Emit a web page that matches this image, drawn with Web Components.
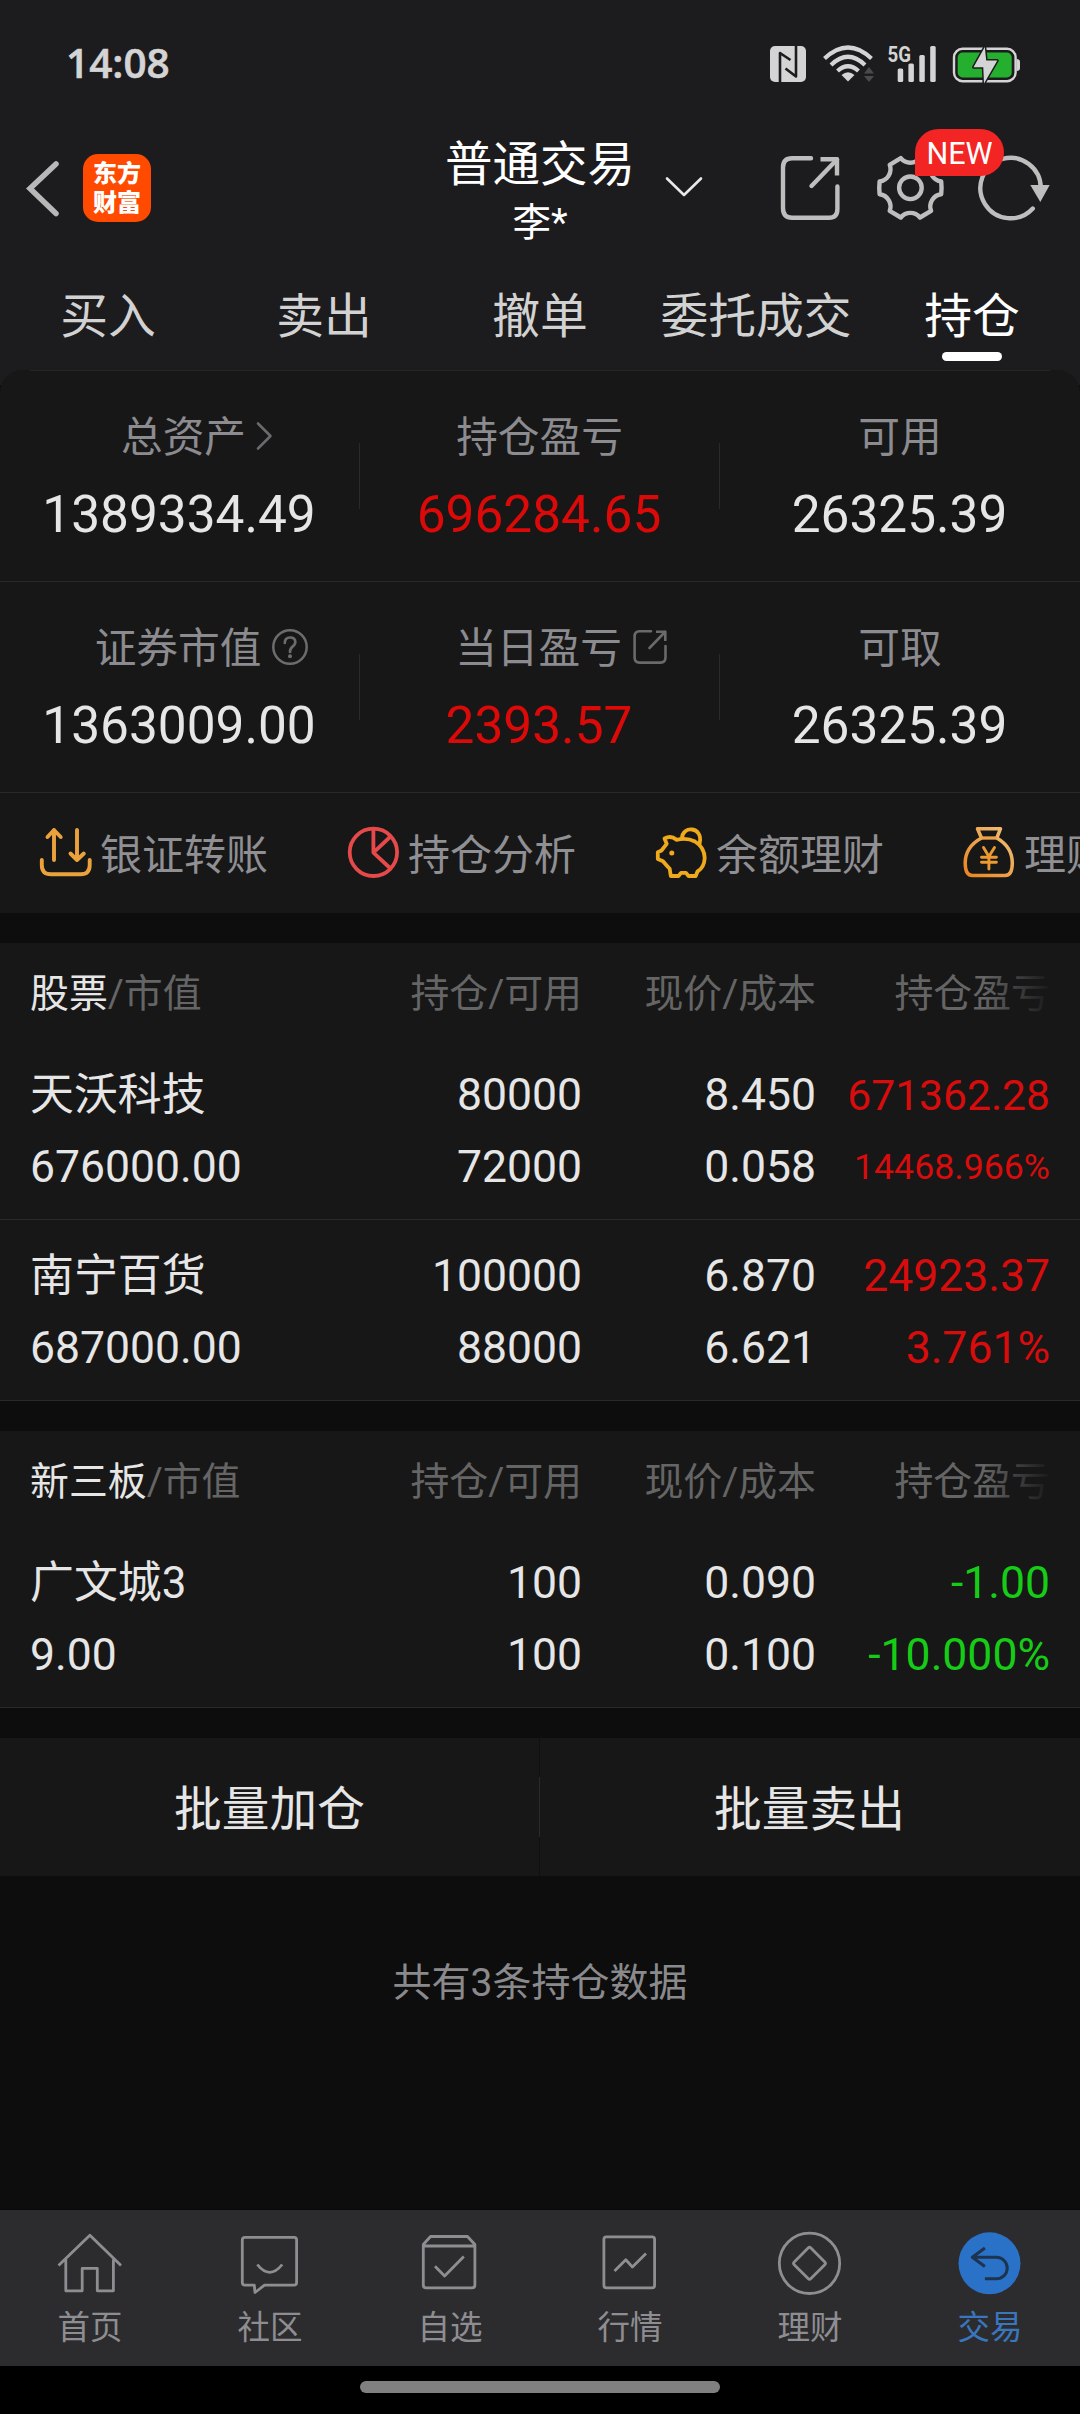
<!DOCTYPE html>
<html lang="zh-CN">
<head>
<meta charset="utf-8">
<title>持仓</title>
<style>
html,body{margin:0;padding:0;background:#0d0d0d}
body{width:1080px;height:2414px;overflow:hidden;font-family:Roboto,"Noto Sans CJK SC",sans-serif;color:#e6e6e6}
</style>
</head>
<body>
<trade-app></trade-app>
<script>
const ICONS = {
  nfc: ['769 45 38 38', `<rect x="770" y="46" width="36" height="36" rx="5" fill="#d4d4d4"/><path d="M780 82V53L790.5 60M796 46V76.500L785.500 68.500" fill="none" stroke="#1c1c1e" stroke-width="2.600"/>`],
  wifi: ['822 44 52 40', `<g fill="none" stroke="#d4d4d4" stroke-width="4.200"><path d="M824.500 58.500Q848 36.500 871.500 58.500"/><path d="M831 65Q848 48.500 865 65"/><path d="M837.500 71Q848 61.500 858.500 71"/></g><path d="M841.500 75Q848 69.500 854.500 75L848 81.500Z" fill="#d4d4d4"/><path d="M864 73.500L869 67L874 73.500ZM864 76L869 82L874 76Z" fill="#4a4a4c"/>`],
  bars: ['888 44 50 40', `<text x="887.500" y="62" font-family="Roboto" font-size="22" font-weight="700" textLength="23.500" lengthAdjust="spacingAndGlyphs" fill="#d4d4d4">5G</text><g fill="#d4d4d4"><rect x="897.700" y="68.500" width="5.500" height="13.500" rx="1.500"/><rect x="908.400" y="63.500" width="5.500" height="18.500" rx="1.500"/><rect x="919.300" y="55" width="5.500" height="27" rx="1.500"/><rect x="930.200" y="46" width="5.500" height="36" rx="1.500"/></g>`],
  battery: ['952 45 70 39', `<rect x="954" y="48.800" width="61.600" height="32.400" rx="8.500" fill="none" stroke="#d4d4d4" stroke-width="2.400"/><path d="M1016.500 59Q1020 59 1020 62V68Q1020 71 1016.500 71Z" fill="#d4d4d4"/><rect x="957.700" y="52.500" width="54" height="25" rx="5" fill="#24b02e"/><path d="M984.800 47L973.500 67.200H983.300L984 83.500L997.300 60.500H986.200Z" fill="#d4d4d4" stroke="#1c1c1e" stroke-width="3" paint-order="stroke"/>`],
  back: ['26 158 36 60', `<path d="M56 164L30 188.500L56 213.500" fill="none" stroke="#b8b8b8" stroke-width="5.500" stroke-linecap="round" stroke-linejoin="miter"/>`],
  down: ['664 174 40 26', `<path d="M667 178.500L684 195L701 178.500" fill="none" stroke="#e8e8e8" stroke-width="2.600" stroke-linecap="round"/>`],
  share: ['780 156 62 66', `<g fill="none" stroke="#bebebe" stroke-width="4.400"><path d="M811 159.200H792Q783 159.200 783 168.500V209Q783 218.800 792 218.800H829Q837.400 218.800 837.400 210V187.500" stroke-linecap="round"/><path d="M820.500 160.300H837V176.500" stroke-linecap="butt"/><path d="M837 160.500L811.500 187" stroke-linecap="round"/></g>`],
  gear: ['876 154 70 68', `<g transform="translate(910.400 187.800)" fill="none" stroke="#bebebe" stroke-width="4.400" stroke-linejoin="round"><circle r="11.300"/><path d="M30.800 -6.400Q31.500 0 30.800 6.400A12.300 12.300 0 0 0 20.700 23L9.600 29.700A12.300 12.300 0 0 0 -9.600 29.700L-20.700 23A12.300 12.300 0 0 0 -30.800 6.400Q-31.500 0 -30.800 -6.400A12.300 12.300 0 0 0 -20.700 -23L-9.600 -29.700A12.300 12.300 0 0 0 9.600 -29.700L20.700 -23A12.300 12.300 0 0 0 30.800 -6.400Z"/></g>`],
  reload: ['978 154 74 68', `<path d="M1032.800 208.500A30.200 30.200 0 1 1 1040.800 188" fill="none" stroke="#bebebe" stroke-width="4.400" stroke-linecap="round"/><path d="M1030.300 185H1049.700L1040.300 202Z" fill="#bebebe"/>`],
  chev: ['257 419 17 30', `<path d="M259 421.500L271.500 434L259 446.500" fill="none" stroke="#6a6a6c" stroke-width="2.600" stroke-linecap="round"/>`],
  help: ['271 626 38 38', `<circle cx="290" cy="645" r="16.700" fill="none" stroke="#6c6c6e" stroke-width="2.500"/><path d="M284.800 641Q284.800 635.500 290 635.500Q295.300 635.500 295.300 640Q295.300 642.600 292.300 644.800Q290 646.500 290 650" fill="none" stroke="#6c6c6e" stroke-width="2.700" stroke-linecap="round"/><circle cx="290" cy="654.300" r="2" fill="#6c6c6e"/>`],
  out: ['632 627 36 36', `<g fill="none" stroke="#6a6a6c" stroke-width="2.600"><path d="M651 629.300H639.500Q634.600 629.300 634.600 634.500V655.500Q634.600 660.600 639.500 660.600H660.500Q665.500 660.600 665.500 655.500V644" stroke-linecap="round"/><path d="M656 629.700H665.300V639"/><path d="M665 630L649.500 646" stroke-linecap="round"/></g>`],
  transfer: ['39 826 53 53', `<g fill="none" stroke="#eba23c" stroke-width="3.900" stroke-linecap="round" stroke-linejoin="round"><path d="M54 860V830M47.500 837L54 830L60.700 837"/><path d="M77 830V860M70.500 853.500L77 860L83.800 853.500"/><path d="M41.800 860V865Q41.800 874.300 51 874.300H80.500Q89.700 874.300 89.700 865V860"/></g>`],
  pie: ['347 826 53 53', `<g fill="none" stroke="#e5494a" stroke-width="3.800" stroke-linejoin="round"><circle cx="373.400" cy="852.300" r="23.700"/><path d="M373.400 829V852.600L390 837M373.400 852.600L390.500 868.500"/></g>`],
  pig: ['655 826 53 53', `<g fill="none" stroke="#efa91c" stroke-width="3.800" stroke-linejoin="round" stroke-linecap="round"><path d="M664.500 838.500Q671 835 676.500 839.800Q687 837.500 695 841.500Q704.500 847.500 704.700 858Q704.300 867.500 697.500 871.500L695.700 876H688.500L686 872.800H681L678.500 876H670.800L669.700 868.800Q666.500 865.500 663 861.300L657.800 859V852.300L661.500 850.500L666.700 843.800Z"/><path d="M682 838.500C682 825 703.500 826.500 699.700 843"/></g><circle cx="671.800" cy="853" r="2.500" fill="#efa91c"/>`],
  bag: ['963 826 53 53', `<defs><linearGradient id="g" x1="0" y1="1" x2="1" y2="0"><stop offset="0" stop-color="#ec8420"/><stop offset="1" stop-color="#efc27a"/></linearGradient></defs><g fill="none" stroke="url(#g)" stroke-width="3.500" stroke-linejoin="round" stroke-linecap="round"><path d="M977.500 828.700H1000.500L996.800 838Q1012.300 847 1012.300 863Q1012.300 875.600 1005 875.600H972.500Q965.200 875.600 965.200 863Q965.200 847 981.500 838Z"/></g><path d="M981.500 838H996.800" stroke="#eda24a" stroke-width="3.300"/><g fill="none" stroke="#ec9a30" stroke-width="2.900" stroke-linecap="round"><path d="M983.500 847.500L988.900 856.500L994.500 847.500M981.500 857.300H996.400M981.500 862.300H996.400M988.900 857V869"/></g>`],
  home: ['57 2230 66 66', `<path d="M58.500 2265.500L89.900 2235.300L121 2265.500M65.800 2259.500V2290.800H82.200V2268.400H97.300V2290.800H113.400V2259.500"/>`],
  chat: ['237 2230 66 66', `<path d="M245 2237.300H294Q296.600 2237.300 296.600 2240V2282.500Q296.600 2285.200 294 2285.200H264.500L255 2292.500L254.300 2285.200H245Q242.300 2285.200 242.300 2282.500V2240Q242.300 2237.300 245 2237.300ZM257.300 2264.500Q269.700 2280.200 282.200 2264.500"/>`],
  pick: ['417 2230 66 66', `<path d="M423.300 2246H474.900V2285Q474.900 2287.800 472 2287.800H426Q423.300 2287.800 423.300 2285V2244.500L430.500 2236.500H467.500L474.900 2244.500V2246M435 2266.300L444.600 2276L463.800 2256.500"/>`],
  market: ['597 2230 66 66', `<rect x="603.900" y="2236.800" width="50.700" height="51" rx="2.500"/><path d="M614.500 2271L625.800 2259.800L632.400 2267L646 2253.500"/>`],
  wealth: ['777 2230 66 66', `<circle cx="809.500" cy="2263.300" r="30.200"/><rect x="797.700" y="2251.500" width="23.600" height="23.600" rx="2" transform="rotate(45 809.500 2263.300)"/>`],
  trade: ['957 2230 66 66', `<circle cx="989.500" cy="2263.300" r="31" fill="#2a72c7" stroke="none"/><path d="M984.900 2248L972.300 2257.300L984.900 2266.500M973 2257.300H996.500A10.700 10.700 0 0 1 996.500 2278.800H984.900" stroke="#1c3450" stroke-width="3"/>`]
};

const define = (tag, html, setup) => {
  const tpl = document.createElement('template');
  tpl.innerHTML = html;
  customElements.define(tag, class extends HTMLElement {
    constructor() {
      super();
      this.attachShadow({ mode: 'open' }).append(tpl.content.cloneNode(true));
    }
    connectedCallback() { if (setup) setup(this, this.shadowRoot); }
  });
};

define('ui-icon', `<style>:host{display:block;flex:none}svg{display:block;overflow:visible}</style>`, (el, root) => {
  const [vb, body] = ICONS[el.getAttribute('name')];
  const [, , w, h] = vb.split(' ');
  root.innerHTML += `<svg viewBox="${vb}" width="${w}" height="${h}" fill="none" stroke-linejoin="round" ${el.hasAttribute('line') ? 'stroke="#8e8e92" stroke-width="2.8"' : ''}>${body}</svg>`;
});

define('status-bar', `<style>
:host{display:flex;justify-content:space-between;height:128px;padding:0 58px 0 66px;box-sizing:border-box;align-items:center}
.t{font:600 40.500px/60px "Open Sans",sans-serif;color:#d4d4d4;-webkit-text-stroke:.6px #d4d4d4;margin-top:-2px}
.r{display:flex;align-items:center;height:40px}
</style><div class="t">14:08</div><div class="r">
<ui-icon name="nfc"></ui-icon><ui-icon name="wifi" style="margin-left:15px"></ui-icon><ui-icon name="bars" style="margin-left:14px"></ui-icon><ui-icon name="battery" style="margin-left:14px"></ui-icon></div>`);

define('brand-logo', `<style>
:host{display:flex;flex-direction:column;justify-content:center;align-items:center;width:68px;height:68px;border-radius:15px;background:#ff4a00;color:#fff;font:900 24px/29px "Noto Sans CJK SC",sans-serif;box-sizing:border-box;padding-bottom:3px}
</style><div>东方<br>财富</div>`);

define('app-header', `<style>
:host{display:grid;grid-template-columns:440px 200px 1fr;height:120px}
.l{display:flex;align-items:center;padding:0 0 4px 26px;gap:21px}
.c{display:flex;flex-direction:column;align-items:center;padding-top:7px;color:#fff;font-size:47.500px;line-height:60px;white-space:nowrap}
.c small{font-size:38.500px;line-height:56px}
.r{display:flex;align-items:center;padding:0 0 4px 24px}
.g{position:relative;margin-left:34px}
.b{position:absolute;left:39px;top:-25px;width:89px;height:47px;border-radius:24px 24px 24px 0;background:#f22424;color:#fff;font-size:30.500px;line-height:49px;text-align:center;z-index:1}
</style>
<div class="l"><ui-icon name="back"></ui-icon><brand-logo></brand-logo></div>
<div class="c"><span>普通交易</span><small>李*</small></div>
<div class="r"><ui-icon name="down" style="margin-top:-2px"></ui-icon><ui-icon name="share" style="margin-left:76px"></ui-icon>
<div class="g"><ui-icon name="gear"></ui-icon><div class="b">NEW</div></div><ui-icon name="reload" style="margin-left:32px"></ui-icon></div>`);

define('nav-tab', `<style>
:host{display:flex;flex-direction:column;align-items:center;flex:1;color:#d2d2d2;font-size:47.800px;line-height:70px;padding-top:34px;white-space:nowrap}
:host([active]){color:#fff}
i{display:block;width:60px;height:9px;border-radius:4.500px}
:host([active]) i{background:#fff}
</style><slot></slot><i></i>`);

define('nav-tabs', `<style>:host{display:flex;height:122px}</style><slot></slot>`);

define('summary-cell', `<style>
:host{flex:1 1 0;display:flex;align-items:stretch;min-width:0}
.m{flex:1;padding-top:37px;display:flex;flex-direction:column;align-items:center}
.k{display:flex;align-items:center;justify-content:center;height:60px;font-size:41.700px;line-height:60px;color:#8b8b90;padding-left:var(--shift,0);white-space:nowrap}
.k ::slotted(ui-icon){margin-left:10px;margin-bottom:5px}
.v{margin:17px 1px 0 0;font-size:51.400px;line-height:60px;white-space:nowrap}
i{width:1px;height:66px;margin-top:72px;background:#2a2a2b}
:host(:last-child) i{display:none}
:host([up]) .v{color:#dc0909}
</style><div class="m"><div class="k"><span></span><slot></slot></div><div class="v"></div></div><i></i>`, (el, r) => {
  r.querySelector('.k span').textContent = el.getAttribute('label');
  r.querySelector('.v').textContent = el.getAttribute('value');
});

define('summary-row', `<style>:host{display:flex;height:211px;box-sizing:border-box;border-bottom:1px solid #29292a}</style><slot></slot>`);

define('asset-card', `<style>
:host{display:block;background:linear-gradient(#1c1c1e 15px,#0d0d0d 15px)}
.box{background:#171717;border-radius:22px 22px 0 0}
.top{height:1px;margin:0 30px;background:#252526}
</style><div class="box"><div class="top"></div><slot></slot></div>`);

define('quick-item', `<style>
:host{display:flex;align-items:center;gap:8px;flex:none;font-size:42px;line-height:60px;color:#8f8f94;white-space:nowrap}
span{width:168px;padding-top:6px}
</style><span><slot></slot></span>`, (el, r) => {
  const i = document.createElement('ui-icon');
  i.setAttribute('name', el.getAttribute('icon'));
  r.insertBefore(i, r.querySelector('span'));
});

define('quick-bar', `<style>:host{display:flex;gap:79px;height:120px;padding-left:39px;padding-bottom:1px;box-sizing:border-box;overflow:hidden;align-items:center}</style><slot></slot>`);

define('holding-head', `<style>
:host{display:grid;grid-template-columns:318px 234px 234px 234px;height:96px;padding:5px 30px 0;box-sizing:border-box;align-items:center;font-size:38.900px;line-height:60px;color:#656565;text-align:right;position:relative;white-space:nowrap}
div{text-align:left}b{font-weight:400;color:#e6e6e6}
i{position:absolute;right:0;top:0;width:96px;height:96px;background:linear-gradient(90deg,rgba(23,23,23,0),#171717 68px)}
</style><div><b><slot></slot></b>/市值</div><span>持仓/可用</span><span>现价/成本</span><span>持仓盈亏</span><i></i>`);

define('holding-row', `<style>
:host{display:grid;grid-template-columns:318px 234px 234px 234px;grid-auto-rows:72px;height:181px;padding:20px 30px 0;box-sizing:border-box;border-bottom:1px solid #29292a;font-size:44.500px;line-height:72px;text-align:right;white-space:nowrap}
.n{text-align:left}.name{font-size:43.900px}
:host([up]) .p{color:#d80c0c}:host([down]) .p{color:#16cc16}
.m{font-size:42.600px}
.s{font-size:35.700px}
</style>`, (el, r) => {
  const f = el.getAttribute('data').split('|');
  const fit = t => t.length > 9 ? ' s' : t.length > 8 ? ' m' : '';
  const cls = ['n name', '', '', 'p' + fit(f[3]), 'n', '', '', 'p' + fit(f[7])];
  f.forEach((t, i) => {
    const s = document.createElement('span');
    s.className = cls[i];
    s.textContent = t;
    r.append(s);
  });
});

define('holding-block', `<style>:host{display:block;background:#171717;margin-top:30px}</style><slot name="head"></slot><slot></slot>`);

define('batch-bar', `<style>
:host{display:flex;height:138px;margin-top:30px;background:#171717;align-items:center}
div{flex:1 1 0;text-align:center;font-size:47.700px;line-height:70px;padding:6px 1px 0 0}
i{width:1px;height:138px;margin-left:-1px;background:linear-gradient(#101010 39px,#2a2a2b 39px 99px,#101010 99px)}
</style><div>批量加仓</div><i></i><div>批量卖出</div>`);

define('list-note', `<style>:host{display:block;flex:1;padding-top:77px;text-align:center;font-size:39px;line-height:60px;color:#8a8a8d}</style><slot></slot>`);

define('dock-item', `<style>
:host{flex:1;display:flex;flex-direction:column;align-items:center;padding-top:20px;font-size:32.500px;line-height:40px;color:#8e8e92}
:host([active]){color:#3a76be}
span{margin-top:12px}
</style><span><slot></slot></span>`, (el, r) => {
  const i = document.createElement('ui-icon');
  i.setAttribute('name', el.getAttribute('icon'));
  i.setAttribute('line', '');
  r.insertBefore(i, r.querySelector('span'));
});

define('dock-bar', `<style>:host{display:flex;height:157px;box-sizing:border-box;background:#2c2c2e;border-top:1px solid #090909}</style><slot></slot>`);

define('gesture-bar', `<style>:host{display:flex;justify-content:center;height:48px;padding-top:15px;box-sizing:border-box;background:#000}i{width:360px;height:12px;border-radius:6px;background:#808080}</style><i></i>`);

define('trade-app', `<style>
:host{display:flex;flex-direction:column;width:1080px;height:2414px}
header{background:#1c1c1e}
</style>
<header><status-bar></status-bar><app-header></app-header>
<nav-tabs><nav-tab>买入</nav-tab><nav-tab>卖出</nav-tab><nav-tab>撤单</nav-tab><nav-tab>委托成交</nav-tab><nav-tab active>持仓</nav-tab></nav-tabs></header>
<asset-card>
<summary-row><summary-cell label="总资产" value="1389334.49" style="--shift:35px"><ui-icon name="chev"></ui-icon></summary-cell><summary-cell label="持仓盈亏" value="696284.65" up></summary-cell><summary-cell label="可用" value="26325.39"></summary-cell></summary-row>
<summary-row><summary-cell label="证券市值" value="1363009.00" style="--shift:45px"><ui-icon name="help"></ui-icon></summary-cell><summary-cell label="当日盈亏" value="2393.57" up style="--shift:44px"><ui-icon name="out"></ui-icon></summary-cell><summary-cell label="可取" value="26325.39"></summary-cell></summary-row>
<quick-bar><quick-item icon="transfer">银证转账</quick-item><quick-item icon="pie">持仓分析</quick-item><quick-item icon="pig">余额理财</quick-item><quick-item icon="bag">理财</quick-item></quick-bar>
</asset-card>
<holding-block><holding-head slot="head">股票</holding-head>
<holding-row up data="天沃科技|80000|8.450|671362.28|676000.00|72000|0.058|14468.966%"></holding-row>
<holding-row up data="南宁百货|100000|6.870|24923.37|687000.00|88000|6.621|3.761%"></holding-row></holding-block>
<holding-block><holding-head slot="head">新三板</holding-head>
<holding-row down data="广文城3|100|0.090|-1.00|9.00|100|0.100|-10.000%"></holding-row></holding-block>
<batch-bar></batch-bar>
<list-note>共有3条持仓数据</list-note>
<dock-bar><dock-item icon="home">首页</dock-item><dock-item icon="chat">社区</dock-item><dock-item icon="pick">自选</dock-item><dock-item icon="market">行情</dock-item><dock-item icon="wealth">理财</dock-item><dock-item icon="trade" active>交易</dock-item></dock-bar>
<gesture-bar></gesture-bar>`);
</script>
</body>
</html>
